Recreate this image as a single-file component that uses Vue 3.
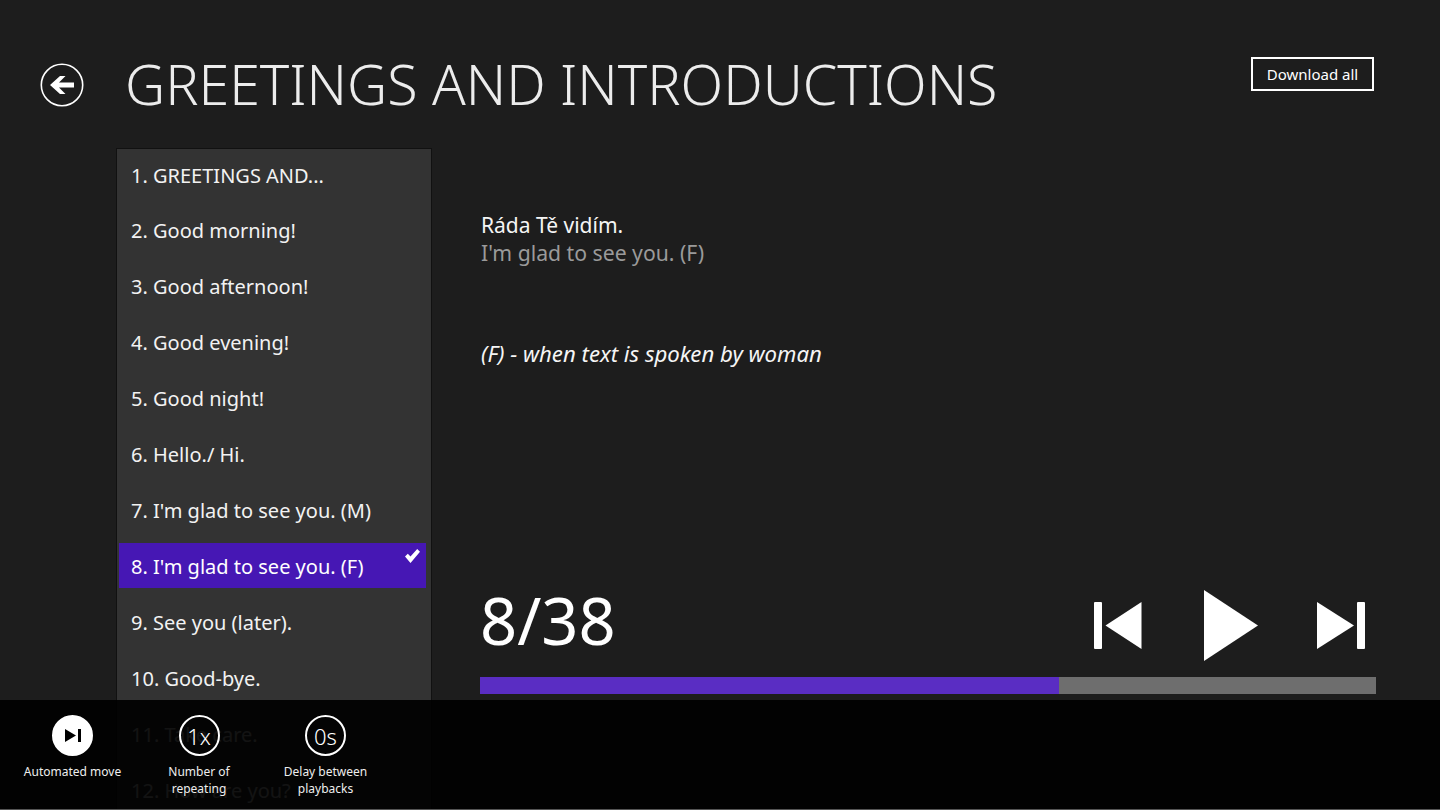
<script setup>
const phrases = [
  '1. GREETINGS AND...',
  '2. Good morning!',
  '3. Good afternoon!',
  '4. Good evening!',
  '5. Good night!',
  '6. Hello./ Hi.',
  "7. I'm glad to see you. (M)",
  "8. I'm glad to see you. (F)",
  '9. See you (later).',
  '10. Good-bye.',
  '11. Take care.',
  '12. How are you?'
]
const current = 8
const total = 38
const progress = 64.6
</script>

<template>
  <div class="page">
    <header class="top">
      <button class="back" aria-label="Back">
        <svg width="44" height="44" viewBox="0 0 44 44">
          <circle cx="22" cy="22" r="20.7" fill="none" stroke="#fff" stroke-width="1.6" />
          <path d="M10 22 L20 13 H25.5 L19 19.4 H34 V24.6 H19 L25.5 31 H20 Z" fill="#fff" />
        </svg>
      </button>
      <h1>GREETINGS AND INTRODUCTIONS</h1>
      <button class="download">Download all</button>
    </header>

    <main class="body">
      <ul class="list">
        <li v-for="(p, i) in phrases" :key="p" :class="{ selected: i === current - 1 }">
          {{ p }}
          <svg v-if="i === current - 1" class="tick" width="18" height="16" viewBox="0 0 18 16">
            <path d="M1 8.5 L3.8 5.7 L6.5 8.5 L13.2 1 L16 3.7 L6.5 15 Z" fill="#fff" />
          </svg>
        </li>
      </ul>

      <section class="detail">
        <div class="phrase">
          <div class="native">Ráda Tě vidím.</div>
          <div class="trans">I'm glad to see you. (F)</div>
        </div>
        <div class="note">(F) - when text is spoken by woman</div>

        <div class="player">
          <div class="count">{{ current }}/{{ total }}</div>
          <div class="controls">
            <svg width="48" height="47" viewBox="0 0 48 47">
              <rect x="0" y="0" width="8" height="47" rx="1" fill="#fff" />
              <path d="M11.5 23.5 L47.5 0 V47 Z" fill="#fff" />
            </svg>
            <svg class="play" width="54" height="71" viewBox="0 0 54 71">
              <path d="M0 0 L54 35.5 L0 71 Z" fill="#fff" />
            </svg>
            <svg width="48" height="47" viewBox="0 0 48 47">
              <path d="M0 0 L37 23.5 L0 47 Z" fill="#fff" />
              <rect x="40" y="0" width="8" height="47" rx="1" fill="#fff" />
            </svg>
          </div>
        </div>
        <div class="bar">
          <div class="fill" :style="{ width: progress + '%' }"></div>
        </div>
      </section>
    </main>

    <footer class="appbar">
      <div class="cmd auto">
        <span class="round on">
          <svg width="16" height="13" viewBox="0 0 16 13">
            <path d="M0 0 L11 6.5 L0 13 Z" fill="#000" />
            <rect x="13" y="0" width="3" height="13" fill="#000" />
          </svg>
        </span>
        <span class="label">Automated move</span>
      </div>
      <div class="cmd rep">
        <span class="round">1x</span>
        <span class="label">Number of<br />repeating</span>
      </div>
      <div class="cmd delay">
        <span class="round">0s</span>
        <span class="label">Delay between<br />playbacks</span>
      </div>
    </footer>
  </div>
</template>

<style>
html, body {
  margin: 0;
  background: #1d1d1d;
}
</style>

<style scoped>
.page {
  position: relative;
  width: 1440px;
  height: 810px;
  overflow: hidden;
  background: #1d1d1d;
  color: #fff;
  font-family: "Noto Sans", "Open Sans", sans-serif;
}
.top {
  display: flex;
  align-items: flex-start;
  height: 148px;
  box-sizing: border-box;
  padding: 0 66px 0 40px;
}
.back {
  width: 44px;
  height: 44px;
  margin-top: 63px;
  padding: 0;
  border: none;
  background: none;
}
.back svg {
  display: block;
}
h1 {
  margin: 48px 0 0 41px;
  font-size: 55.5px;
  line-height: 72px;
  font-weight: 300;
  color: #ececec;
  white-space: nowrap;
}
.download {
  margin: 57px 0 0 auto;
  width: 123px;
  height: 34px;
  padding: 0;
  border: 2px solid #fff;
  background: none;
  color: #fff;
  font-family: inherit;
  font-size: 15px;
}
.body {
  display: flex;
  align-items: flex-start;
}
.list {
  list-style: none;
  margin: 0 0 0 116px;
  padding: 2px 5px 0 2px;
  width: 316px;
  height: 700px;
  box-sizing: border-box;
  background: #333;
  border: 1px solid #111;
  flex-shrink: 0;
}
.list li {
  position: relative;
  height: 45px;
  margin-bottom: 11px;
  padding-left: 12px;
  font-size: 20px;
  line-height: 48px;
  white-space: nowrap;
  color: #f2f2f2;
}
.list li:first-child {
  line-height: 49px;
}
.list li.selected {
  background: #4617b4;
  color: #fff;
}
.tick {
  position: absolute;
  top: 5px;
  right: 4px;
}
.detail {
  width: 896px;
  margin-left: 48px;
}
.phrase {
  margin-top: 63px;
  padding-left: 1px;
  line-height: 28px;
}
.native {
  font-size: 21px;
  color: #f5f5f5;
}
.trans {
  font-size: 21.2px;
  color: #9a9a9a;
}
.note {
  margin-top: 73px;
  padding-left: 1px;
  font-size: 22.2px;
  line-height: 28px;
  font-style: italic;
  color: #f5f5f5;
}
.player {
  display: flex;
  align-items: center;
  justify-content: space-between;
  margin-top: 205px;
  height: 104px;
}
.count {
  padding-bottom: 10px;
  font-size: 65px;
  line-height: 80px;
  color: #fff;
}
.controls {
  display: flex;
  align-items: center;
  padding-right: 11px;
}
.play {
  margin: 0 59px 0 62px;
}
.bar {
  height: 17px;
  background: #6e6e6e;
}
.fill {
  height: 100%;
  background: #5a2dc3;
}
.appbar {
  position: absolute;
  left: 0;
  right: 0;
  bottom: 0;
  height: 110px;
  box-sizing: border-box;
  border-bottom: 1px solid #555;
  background: rgba(0, 0, 0, 0.92);
  display: flex;
  align-items: flex-start;
}
.cmd {
  display: flex;
  flex-direction: column;
  align-items: center;
  padding-top: 15px;
}
.auto {
  width: 145px;
}
.rep {
  width: 108px;
}
.delay {
  width: 145px;
}
.round {
  display: flex;
  align-items: center;
  justify-content: center;
  width: 41px;
  height: 41px;
  box-sizing: border-box;
  border: 2px solid #fff;
  border-radius: 50%;
  font-size: 22px;
  font-weight: 300;
  color: #fff;
}
.round.on {
  background: #fff;
}
.label {
  margin-top: 7px;
  font-size: 12px;
  line-height: 17px;
  text-align: center;
  color: #eee;
  white-space: nowrap;
}
</style>
